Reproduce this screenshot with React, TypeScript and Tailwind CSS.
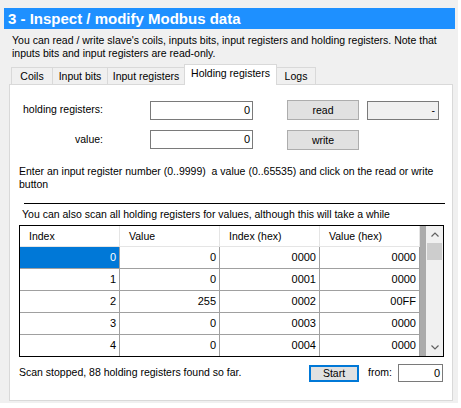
import React from 'react';

const rows: [number, number, string, string][] = [
  [0, 0, '0000', '0000'],
  [1, 0, '0001', '0000'],
  [2, 255, '0002', '00FF'],
  [3, 0, '0003', '0000'],
  [4, 0, '0004', '0000'],
];

function Chevron({ up }: { up?: boolean }) {
  return (
    <svg width="8" height="5" viewBox="0 0 8 5">
      <polyline
        points={up ? '0.5,4.5 4,1 7.5,4.5' : '0.5,0.5 4,4 7.5,0.5'}
        fill="none"
        stroke="#606060"
        strokeWidth="1.2"
      />
    </svg>
  );
}

function TextBox({ value, w, h }: { value: string; w: string; h: string }) {
  return (
    <div className={`${w} ${h} border border-[#7a7a7a] bg-white pr-[2px] text-right text-[11px] leading-[17px]`}>
      {value}
    </div>
  );
}

function Grid() {
  return (
    <div className="ml-[9px] mt-[4px] flex w-[425px] border border-black bg-[#ababab]">
      <div className="w-[400px] bg-white">
        {/* header */}
        <div className="flex h-[21px] border-b border-[#e5e5e5]">
          {['Index', 'Value', 'Index (hex)', 'Value (hex)'].map((h) => (
            <div key={h} className="w-[100px] border-r border-[#e5e5e5] pl-[9px] leading-[20px]">
              {h}
            </div>
          ))}
        </div>
        {rows.map((r, i) => (
          <div
            key={i}
            className={i < rows.length - 1 ? 'flex h-[22px] border-b border-[#a0a0a0]' : 'flex h-[21px]'}
          >
            {r.map((c, j) => (
              <div
                key={j}
                className={
                  i === 0 && j === 0
                    ? 'w-[100px] border-r border-[#a0a0a0] bg-[#0078d7] pr-[3px] text-right text-[11px] leading-[21px] text-white'
                    : 'w-[100px] border-r border-[#a0a0a0] pr-[3px] text-right text-[11px] leading-[21px]'
                }
              >
                {c}
              </div>
            ))}
          </div>
        ))}
      </div>
      <div className="w-[6px]" />
      {/* scrollbar */}
      <div className="flex w-[17px] flex-col bg-[#f0f0f0]">
        <div className="flex h-[17px] items-center justify-center">
          <Chevron up />
        </div>
        <div className="mx-[1px] h-[17px] bg-[#cdcdcd]" />
        <div className="flex-1" />
        <div className="flex h-[17px] items-center justify-center">
          <Chevron />
        </div>
      </div>
    </div>
  );
}

export default function App() {
  const tabs = ['Coils', 'Input bits', 'Input registers', 'Holding registers', 'Logs'];
  const widths = ['w-[41px]', 'w-[55px]', 'w-[77px]', 'w-[93px]', 'w-[39px]'];

  return (
    <div className="h-[408px] w-[461px] bg-white font-['Liberation_Sans',Arial,sans-serif] text-[10.5px] text-black">
      <div className="h-[403px] w-[458px] bg-[#f0f0f0] pt-[8px]">
        {/* Title bar */}
        <div className="ml-[4px] h-[21px] w-[451px] bg-[#1e90ff] pl-[4px] text-[15px] font-bold leading-[21px] text-white">
          3 - Inspect / modify Modbus data
        </div>

        <p className="ml-[12px] mt-[5px] w-[436px] leading-[13px]">
          You can read / write slave's coils, inputs bits, input registers and holding registers. Note that inputs
          bits and input registers are read-only.
        </p>

        {/* Tabs */}
        <div className="ml-[11px] mt-[4px] flex h-[20px] items-end">
          {tabs.map((t, i) =>
            i === 3 ? (
              <div
                key={t}
                className={`${widths[i]} relative z-10 -mb-[1px] h-[21px] border-x border-t border-[#d9d9d9] bg-white pt-[1px] text-center leading-[15px]`}
              >
                {t}
              </div>
            ) : (
              <div
                key={t}
                className={`${widths[i]} h-[17px] border-t border-[#d9d9d9] bg-[#f0f0f0] text-center leading-[17px] ${
                  i === 0 ? 'border-l' : i === 4 ? 'border-r' : i === 1 || i === 2 ? 'border-l' : ''
                }`}
              >
                {t}
              </div>
            )
          )}
        </div>

        {/* Tab page */}
        <div className="ml-[9px] h-[317px] w-[444px] border border-[#d9d9d9] bg-white">
          <div className="mt-[15px] flex h-[20px] items-center">
            <div className="w-[93px] text-right">holding registers:</div>
            <div className="ml-[47px]">
              <TextBox value="0" w="w-[103px]" h="h-[19px]" />
            </div>
            <div className="ml-[34px] h-[20px] w-[72px] border border-[#adadad] bg-[#e1e1e1] text-center leading-[18px]">
              read
            </div>
            <div className="ml-[8px] h-[19px] w-[72px] border border-[#7a7a7a] bg-[#f0f0f0] pr-[3px] text-right leading-[17px]">
              -
            </div>
          </div>

          <div className="mt-[9px] flex h-[21px] items-center">
            <div className="w-[93px] text-right">value:</div>
            <div className="ml-[47px]">
              <TextBox value="0" w="w-[103px]" h="h-[19px]" />
            </div>
            <div className="ml-[34px] h-[20px] w-[72px] border border-[#adadad] bg-[#e1e1e1] text-center leading-[18px]">
              write
            </div>
          </div>

          <p className="ml-[9px] mt-[15px] w-[420px] leading-[13px]">
            Enter an input register number (0..9999)&nbsp; a value (0..65535) and click on the read or write button
          </p>

          <div className="ml-[14px] mt-[12px] h-px w-[421px] bg-black" />

          <p className="ml-[12px] mt-[4px] leading-[13px]">
            You can also scan all holding registers for values, although this will take a while
          </p>

          <Grid />

          <div className="ml-[9px] mt-[7px] flex h-[18px] items-center">
            <div className="w-[290px]">Scan stopped, 88 holding registers found so far.</div>
            <div className="h-[17px] w-[50px] border-2 border-[#0078d7] bg-[#e1e1e1] text-center leading-[13px]">
              Start
            </div>
            <div className="ml-[9px] w-[30px]">from:</div>
            <TextBox value="0" w="w-[45px]" h="h-[18px]" />
          </div>
        </div>
      </div>
    </div>
  );
}
